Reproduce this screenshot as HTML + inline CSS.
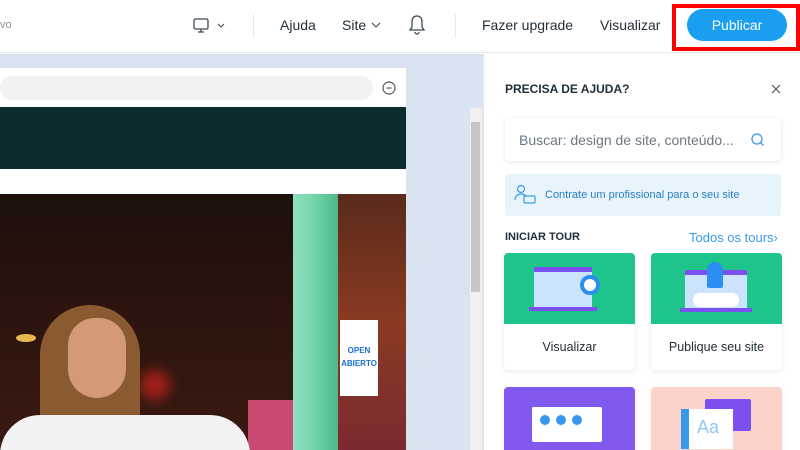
<!DOCTYPE html>
<html><head><meta charset="utf-8"><style>
*{margin:0;padding:0;box-sizing:border-box}
html,body{width:800px;height:450px;overflow:hidden}
body{font-family:"Liberation Sans",sans-serif;background:#fff;position:relative}
.abs{position:absolute}
.top{left:0;top:0;width:800px;height:53px;background:#fff;border-bottom:1px solid #e3e8ee}
.nav{font-size:14px;color:#20303c;top:17px}
.card{background:#fff;border-radius:4px;box-shadow:0 2px 6px rgba(0,0,0,.08);overflow:hidden}
</style></head><body>
<div class="abs" style="left:0;top:0;width:800px;height:450px;overflow:hidden">
<div class="abs top"></div>
<div class="abs" style="left:0;top:19px;font-size:11px;color:#8a96a0">vo</div>
<svg class="abs" style="left:192px;top:17px" width="36" height="18"><rect x="2" y="2" width="14" height="10" rx="1.5" fill="none" stroke="#3b4a56" stroke-width="1.3"/><path d="M9 12v3M6 15h6" stroke="#3b4a56" stroke-width="1.3"/><path d="M26 7l3 3 3-3" fill="none" stroke="#3b4a56" stroke-width="1.1"/></svg>
<div class="abs" style="left:253px;top:14px;width:1px;height:24px;background:#e6e9ed"></div>
<div class="abs nav" style="left:280px">Ajuda</div>
<div class="abs nav" style="left:342px">Site</div>
<svg class="abs" style="left:371px;top:21px" width="10" height="8"><path d="M1 2l4 4 4-4" fill="none" stroke="#3b4a56" stroke-width="1.1"/></svg>
<svg class="abs" style="left:408px;top:14px" width="18" height="22"><path d="M9 2c-3.5 0-5 2.5-5 6v5l-2 3h14l-2-3V8c0-3.5-1.5-6-5-6zM7 18a2 2 0 004 0" fill="none" stroke="#3b4a56" stroke-width="1.3"/></svg>
<div class="abs" style="left:455px;top:14px;width:1px;height:24px;background:#e6e9ed"></div>
<div class="abs nav" style="left:482px">Fazer upgrade</div>
<div class="abs nav" style="left:600px">Visualizar</div>
<div class="abs" style="left:672px;top:4px;width:128px;height:47px;border:4px solid #f00"></div>
<div class="abs" style="left:687px;top:9px;width:100px;height:32px;border-radius:16px;background:#1a9ff0;color:#fff;font-size:14px;text-align:center;line-height:32px">Publicar</div>

<div class="abs" style="left:0;top:54px;width:483px;height:396px;background:#d9e4f0"></div>
<div class="abs" style="left:0;top:68px;width:406px;height:382px;background:#fff"></div>
<div class="abs" style="left:0;top:76px;width:373px;height:24px;border-radius:12px;background:#f1f2f4"></div>
<svg class="abs" style="left:381px;top:80px" width="16" height="16"><circle cx="8" cy="8" r="6" fill="none" stroke="#555" stroke-width="1.2"/><path d="M5.5 8h5" stroke="#555" stroke-width="1.2"/></svg>
<div class="abs" style="left:0;top:107px;width:406px;height:62px;background:#0b2d2f"></div>
<div class="abs" style="left:0;top:194px;width:406px;height:256px;background:linear-gradient(180deg,#1c0f0a,#2a130d 40%,#3a1a12)"></div>
<div class="abs" style="left:140px;top:370px;width:30px;height:30px;border-radius:50%;background:#a0201a;filter:blur(6px)"></div>
<div class="abs" style="left:16px;top:334px;width:20px;height:8px;border-radius:50%;background:#e8b850"></div>
<div class="abs" style="left:248px;top:400px;width:45px;height:50px;background:#c84a70"></div>
<div class="abs" style="left:293px;top:194px;width:45px;height:256px;background:linear-gradient(90deg,#8fe0c0,#6fd4a8 50%,#4cb888)"></div>
<div class="abs" style="left:338px;top:194px;width:68px;height:256px;background:linear-gradient(180deg,#5a2a1a,#8a3a22 50%,#7a2a30)"></div>
<div class="abs" style="left:340px;top:320px;width:38px;height:76px;background:#fff;color:#1a6fd0;font-size:8px;font-weight:bold;text-align:center;padding-top:24px;line-height:13px">OPEN<br>ABIERTO</div>
<div class="abs" style="left:40px;top:305px;width:100px;height:140px;border-radius:50px 50px 20px 20px;background:#8a5a30"></div>
<div class="abs" style="left:68px;top:318px;width:58px;height:80px;border-radius:28px 28px 30px 30px;background:#d49a78"></div>
<div class="abs" style="left:0;top:415px;width:250px;height:50px;border-radius:40px 40px 0 0;background:#f2f2f2"></div>
<div class="abs" style="left:470px;top:108px;width:12px;height:342px;background:#f0f0f0"></div>
<div class="abs" style="left:471px;top:122px;width:9px;height:170px;background:#c6c6c6"></div>

<div class="abs" style="left:483px;top:54px;width:317px;height:396px;background:#fff;border-left:1px solid #e3e8ee"></div>
<div class="abs" style="left:505px;top:82px;font-size:12px;font-weight:bold;color:#20303c">PRECISA DE AJUDA?</div>
<svg class="abs" style="left:771px;top:84px" width="10" height="10"><path d="M1 1l8 8M9 1l-8 8" stroke="#555" stroke-width="1.2"/></svg>
<div class="abs" style="left:505px;top:118px;width:276px;height:43px;border-radius:4px;box-shadow:0 1px 5px rgba(0,0,0,.1);background:#fff"></div>
<div class="abs" style="left:519px;top:132px;font-size:14px;color:#6b7884">Buscar: design de site, conteúdo...</div>
<svg class="abs" style="left:750px;top:132px" width="16" height="16"><circle cx="7" cy="7" r="5" fill="none" stroke="#3899ec" stroke-width="1.3"/><path d="M10.5 10.5l3 3" stroke="#3899ec" stroke-width="1.3"/></svg>
<div class="abs" style="left:505px;top:174px;width:276px;height:42px;border-radius:3px;background:#e7f4fb"></div>
<svg class="abs" style="left:514px;top:184px" width="24" height="22"><circle cx="7" cy="5" r="3.5" fill="none" stroke="#3899ec" stroke-width="1.2"/><path d="M1 16c0-4 3-6 6-6s4 1 5 2" fill="none" stroke="#3899ec" stroke-width="1.2"/><rect x="10" y="12" width="11" height="7" rx="1" fill="none" stroke="#3899ec" stroke-width="1.2"/></svg>
<div class="abs" style="left:545px;top:189px;font-size:11px;color:#2a7ec8">Contrate um profissional para o seu site</div>
<div class="abs" style="left:505px;top:231px;font-size:11px;font-weight:bold;color:#20303c">INICIAR TOUR</div>
<div class="abs" style="left:689px;top:230px;font-size:13px;color:#3899ec">Todos os tours›</div>
<div class="abs card" style="left:504px;top:253px;width:131px;height:117px"><div style="height:71px;background:#1ec48a;position:relative"><div class="abs" style="left:30px;top:14px;width:58px;height:40px;background:#cce4fb;border-top:5px solid #7c4ff0"></div><div class="abs" style="left:25px;top:54px;width:68px;height:4px;background:#7c4ff0"></div><div class="abs" style="left:76px;top:22px;width:20px;height:20px;border-radius:50%;border:4px solid #2b8ef0;background:#fff"></div></div><div style="text-align:center;font-size:12.5px;color:#20303c;padding-top:16px">Visualizar</div></div>
<div class="abs card" style="left:651px;top:253px;width:131px;height:117px"><div style="height:71px;background:#1ec48a;position:relative"><div class="abs" style="left:34px;top:17px;width:62px;height:38px;background:#cce4fb;border-top:5px solid #7c4ff0"></div><div class="abs" style="left:29px;top:55px;width:72px;height:4px;background:#7c4ff0"></div><div class="abs" style="left:56px;top:9px;width:16px;height:26px;border-radius:8px 8px 2px 2px;background:#2b8ef0"></div><div class="abs" style="left:42px;top:40px;width:46px;height:14px;border-radius:8px;background:#fff"></div></div><div style="text-align:center;font-size:12.5px;color:#20303c;padding-top:16px">Publique seu site</div></div>
<div class="abs card" style="left:504px;top:387px;width:131px;height:70px;background:#8159ef"><div class="abs" style="left:28px;top:20px;width:70px;height:35px;background:#fff;border-radius:2px"></div><div class="abs" style="left:36px;top:28px;width:10px;height:10px;border-radius:50%;background:#3899ec;box-shadow:16px 0 #3899ec,32px 0 #3899ec"></div></div>
<div class="abs card" style="left:651px;top:387px;width:131px;height:70px;background:#fbd3cb"><div class="abs" style="left:54px;top:12px;width:46px;height:32px;background:#7c4ff0;border-radius:2px"></div><div class="abs" style="left:30px;top:22px;width:52px;height:40px;background:#fff;border-left:8px solid #3899ec;color:#8fc8f5;font-size:18px;padding:8px 0 0 8px">Aa</div></div>
</div>
</body></html>
